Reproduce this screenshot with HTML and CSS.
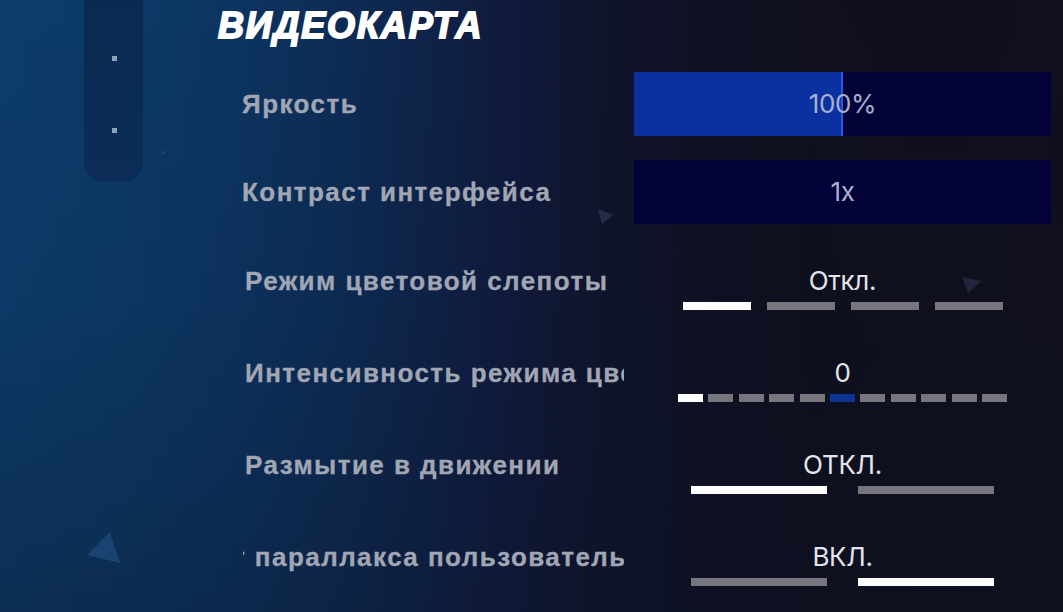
FILE: index.html
```html
<!DOCTYPE html>
<html lang="ru">
<head>
<meta charset="utf-8">
<title>Видеокарта</title>
<link rel="stylesheet" href="styles.css">
</head>
<body>
<div class="screen">
  <svg class="decor" width="1063" height="612" viewBox="0 0 1063 612" aria-hidden="true">
    <polygon points="110,532 87,555 120,563" fill="#1e4677" opacity="0.85"/>
    <polygon points="598,209 613,215 602,224" fill="#2b3152" opacity="0.8"/>
    <polygon points="962,277 982,281 968,293" fill="#252640" opacity="0.9"/>
    <polygon points="162,150 166,153 161,155" fill="#254a78" opacity="0.7"/>
  </svg>

  <aside class="rail">
    <span class="rail-dot"></span>
    <span class="rail-dot"></span>
  </aside>

  <main class="panel">
    <h1 class="panel-title">ВИДЕОКАРТА</h1>

    <div class="bars">
      <div class="row">
        <div class="label">Яркость</div>
        <div class="slider">
          <div class="slider-fill" style="width:50.1%"></div>
          <span class="slider-value">100%</span>
        </div>
      </div>
      <div class="row">
        <div class="label">Контраст интерфейса</div>
        <div class="slider">
          <div class="slider-fill slider-fill--empty" style="width:0%"></div>
          <span class="slider-value">1x</span>
        </div>
      </div>
    </div>

    <div class="options">
      <div class="row row--option">
        <div class="label label--option">Режим цветовой слепоты</div>
        <div class="choice">
          <span class="choice-value">Откл.</span>
          <div class="segs segs--four">
            <i class="seg seg--on"></i><i class="seg"></i><i class="seg"></i><i class="seg"></i>
          </div>
        </div>
      </div>

      <div class="row row--option">
        <div class="label label--option">Интенсивность режима цветовой слепоты</div>
        <div class="choice">
          <span class="choice-value">0</span>
          <div class="segs segs--eleven">
            <i class="seg seg--on"></i><i class="seg"></i><i class="seg"></i><i class="seg"></i><i class="seg"></i><i class="seg seg--mark"></i><i class="seg"></i><i class="seg"></i><i class="seg"></i><i class="seg"></i><i class="seg"></i>
          </div>
        </div>
      </div>

      <div class="row row--option">
        <div class="label label--option">Размытие в движении</div>
        <div class="choice">
          <span class="choice-value">ОТКЛ.</span>
          <div class="segs segs--two">
            <i class="seg seg--on"></i><i class="seg"></i>
          </div>
        </div>
      </div>

      <div class="row row--option">
        <div class="label label--scrolled"><span class="label-track">т параллакса пользовательского интерфейса</span></div>
        <div class="choice">
          <span class="choice-value">ВКЛ.</span>
          <div class="segs segs--two">
            <i class="seg"></i><i class="seg seg--on"></i>
          </div>
        </div>
      </div>
    </div>
  </main>
</div>
</body>
</html>
```

FILE: styles.css
```css
html, body {
  margin: 0;
  padding: 0;
}

body {
  width: 1063px;
  height: 612px;
  overflow: hidden;
  background: #0f0f1d;
  font-family: "Liberation Sans", Arial, sans-serif;
}

.screen {
  position: relative;
  width: 1063px;
  height: 612px;
  overflow: hidden;
  display: flex;
  align-items: flex-start;
  background:
    linear-gradient(180deg, rgba(12, 20, 40, 0) 0%, rgba(12, 20, 40, 0.10) 50%, rgba(12, 18, 38, 0.35) 100%),
    linear-gradient(90deg, #0c3d6c 0%, #0c3a66 12%, #0c3461 22%, #0d2c55 32%, #0f2247 41%, #10193a 49%, #10142b 57%, #0f1123 66%, #0f0f1d 76%, #100f1c 100%);
}

.decor {
  position: absolute;
  left: 0;
  top: 0;
  pointer-events: none;
}

/* left rail */
.rail {
  position: relative;
  margin-left: 84px;
  width: 59px;
  height: 182px;
  box-sizing: border-box;
  padding-top: 56px;
  display: flex;
  flex-direction: column;
  align-items: center;
  gap: 67px;
  background: linear-gradient(180deg, #0a2a52 0%, #0a2b55 60%, #0b2d58 100%);
  border-radius: 0 0 19px 19px;
  flex: none;
}

.rail-dot {
  display: block;
  width: 5px;
  height: 5px;
  background: #8ea0b6;
  margin-left: 1px;
}

/* panel */
.panel {
  position: relative;
  margin-left: 75px;
  width: 833px;
  display: flex;
  flex-direction: column;
}

.panel-title {
  margin: 6px 0 0 0;
  height: 40px;
  line-height: 40px;
  font-family: "Liberation Sans", Arial, sans-serif;
  font-weight: 700;
  font-style: italic;
  font-size: 36px;
  letter-spacing: 1.8px;
  color: #ffffff;
  -webkit-text-stroke: 1.8px #ffffff;
  white-space: nowrap;
}

.bars {
  margin-top: 26px;
  display: flex;
  flex-direction: column;
  gap: 24px;
}

.row {
  display: grid;
  grid-template-columns: 406px 417px;
  column-gap: 10px;
  align-items: center;
}

.row--option {
  align-items: start;
}

.label {
  margin-left: 24px;
  font-size: 26px;
  font-weight: 700;
  line-height: 32px;
  letter-spacing: 1.45px;
  color: #a0a6b4;
  -webkit-text-stroke: 0.3px #a0a6b4;
  white-space: nowrap;
  overflow: hidden;
}

.label--option {
  margin-left: 27px;
}

.label--scrolled {
  margin-left: 25px;
}

.label-track {
  display: inline-block;
  margin-left: -11px;
}

/* sliders */
.slider {
  display: grid;
  height: 64px;
  background: #020238;
}

.slider > * {
  grid-area: 1 / 1;
}

.slider-fill {
  height: 64px;
  box-sizing: border-box;
  background: #0b309f;
  border-right: 2px solid #1f5de8;
}

.slider-fill--empty {
  border-right: 0;
}

.slider-value {
  align-self: center;
  justify-self: center;
  font-family: Inter, "Noto Sans", sans-serif;
  font-weight: 400;
  font-size: 26px;
  line-height: 32px;
  color: #a9b0cf;
  letter-spacing: -0.3px;
}

/* option choices */
.options {
  margin-top: 41px;
  display: flex;
  flex-direction: column;
  gap: 47px;
}

.choice {
  display: flex;
  flex-direction: column;
  align-items: center;
  gap: 5px;
}

.choice-value {
  font-family: Inter, "Noto Sans", sans-serif;
  font-weight: 400;
  font-size: 26px;
  line-height: 32px;
  color: #e4e4ec;
  letter-spacing: -0.3px;
}

.segs {
  display: flex;
  height: 8px;
}

.seg {
  display: block;
  height: 8px;
  background: #77767f;
}

.seg--on {
  background: #ffffff;
}

.seg--mark {
  background: #0b3594;
}

.segs--four {
  gap: 16px;
}

.segs--four .seg {
  width: 68px;
}

.segs--eleven {
  gap: 5.4px;
}

.segs--eleven .seg {
  width: 25px;
}

.segs--two {
  gap: 31px;
}

.segs--two .seg {
  width: 136px;
}
```
